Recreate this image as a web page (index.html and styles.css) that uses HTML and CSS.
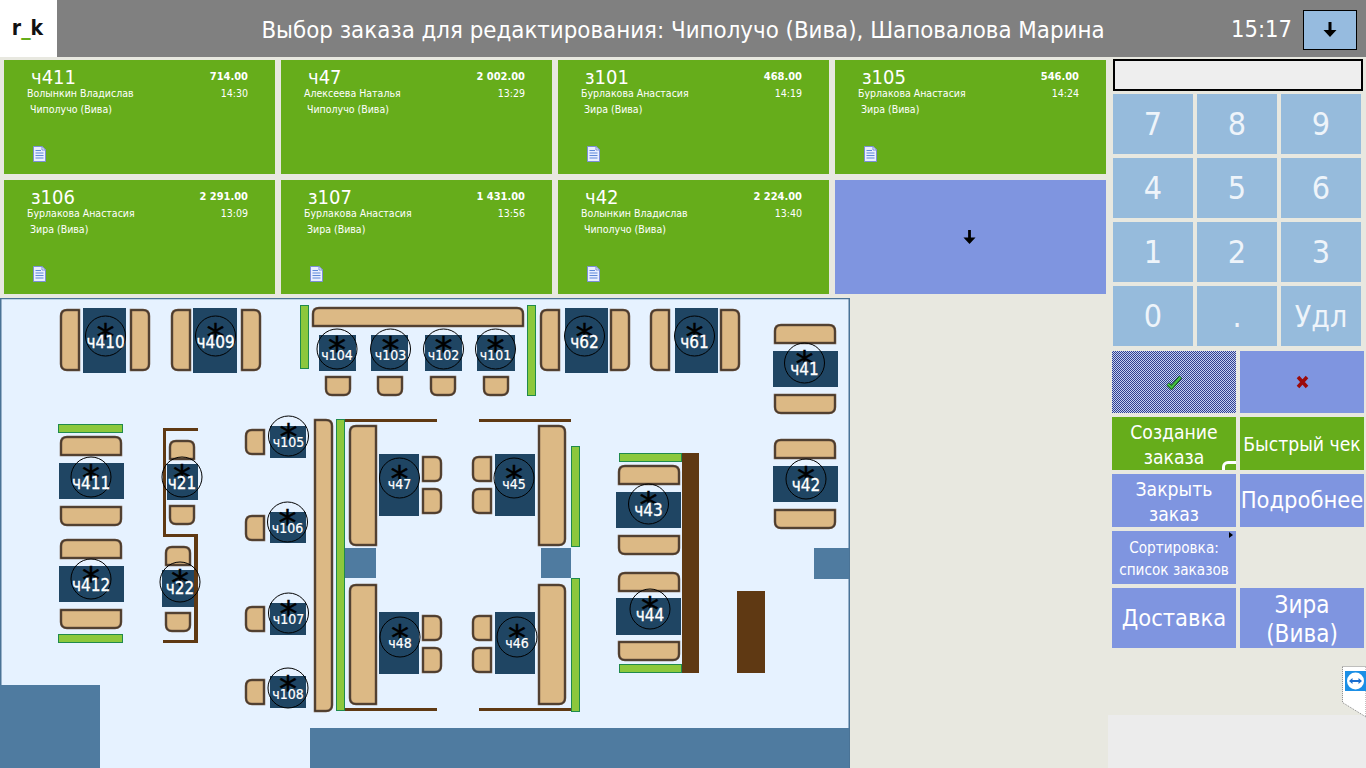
FILE: index.html
```html
<!DOCTYPE html>
<html lang="ru">
<head>
<meta charset="utf-8">
<title>r_k</title>
<link rel="stylesheet" href="styles.css">
</head>
<body>
<div class="app">
  <header class="top">
    <div class="logo">r<span class="us">_</span>k</div>
    <div class="title">Выбор заказа для редактирования: Чиполучо (Вива), Шаповалова Марина</div>
    <div class="clock">
      <span class="time">15:17</span>
      <button class="down"><svg class="arr" viewBox="0 0 14 16"><path d="M5.5 0h3v8h5L7 15 .5 8h5z"/></svg></button>
    </div>
  </header>
  <div class="main">
    <div class="left">
      <section class="cards">
        <article class="card"><div class="row"><span class="num">ч411</span><b class="amt">714.00</b></div><div class="row r2"><span>Волынкин Владислав</span><span>14:30</span></div><div class="place">Чиполучо (Вива)</div><svg class="doc" viewBox="0 0 13 16"><use href="#doc"/></svg></article>
        <article class="card"><div class="row"><span class="num">ч47</span><b class="amt">2 002.00</b></div><div class="row r2"><span>Алексеева Наталья</span><span>13:29</span></div><div class="place">Чиполучо (Вива)</div></article>
        <article class="card"><div class="row"><span class="num">з101</span><b class="amt">468.00</b></div><div class="row r2"><span>Бурлакова Анастасия</span><span>14:19</span></div><div class="place">Зира (Вива)</div><svg class="doc" viewBox="0 0 13 16"><use href="#doc"/></svg></article>
        <article class="card"><div class="row"><span class="num">з105</span><b class="amt">546.00</b></div><div class="row r2"><span>Бурлакова Анастасия</span><span>14:24</span></div><div class="place">Зира (Вива)</div><svg class="doc" viewBox="0 0 13 16"><use href="#doc"/></svg></article>
        <article class="card"><div class="row"><span class="num">з106</span><b class="amt">2 291.00</b></div><div class="row r2"><span>Бурлакова Анастасия</span><span>13:09</span></div><div class="place">Зира (Вива)</div><svg class="doc" viewBox="0 0 13 16"><use href="#doc"/></svg></article>
        <article class="card"><div class="row"><span class="num">з107</span><b class="amt">1 431.00</b></div><div class="row r2"><span>Бурлакова Анастасия</span><span>13:56</span></div><div class="place">Зира (Вива)</div><svg class="doc" viewBox="0 0 13 16"><use href="#doc"/></svg></article>
        <article class="card"><div class="row"><span class="num">ч42</span><b class="amt">2 224.00</b></div><div class="row r2"><span>Волынкин Владислав</span><span>13:40</span></div><div class="place">Чиполучо (Вива)</div><svg class="doc" viewBox="0 0 13 16"><use href="#doc"/></svg></article>
        <button class="more"><svg class="arr small" viewBox="0 0 14 16"><path d="M5.5 0h3v8h5L7 15 .5 8h5z"/></svg></button>
      </section>
      <svg class="floor" viewBox="0 298 850 470">
        <defs>
          <g id="doc"><path class="d1" d="M.5.5H9L12.500 4V15.500H.5z"/><path class="d2" d="M9 .5V4H12.500z"/><path class="d3" d="M2.500 4.500H8M2.500 7H10.500M2.500 9.500H10.500M2.500 12H10.500"/></g>
          <path id="wt" d="M1 19V7Q1 1 7 1H55Q61 1 61 7V19Z"/>
          <path id="wb" d="M1 1V13Q1 19 7 19H55Q61 19 61 13V1Z"/>
          <path id="tl" d="M19 1H7Q1 1 1 7V55Q1 61 7 61H19Z"/>
          <path id="tr" d="M1 1H13Q19 1 19 7V55Q19 61 13 61H1Z"/>
          <path id="st" d="M1 19V7Q1 1 7 1H19Q25 1 25 7V19Z"/>
          <path id="sb" d="M1 1V13Q1 19 7 19H19Q25 19 25 13V1Z"/>
          <path id="sl" d="M19 1H7Q1 1 1 7V19Q1 25 7 25H19Z"/>
          <path id="sr" d="M1 1H13Q19 1 19 7V19Q19 25 13 25H1Z"/>
          <path id="ll" d="M27 1H7Q1 1 1 7V114Q1 120 7 120H27Z"/>
          <path id="lr" d="M1 1H21Q27 1 27 7V114Q27 120 21 120H1Z"/>
          <path id="lv" d="M1 1H12Q18 1 18 7V286Q18 292 12 292H1Z"/>
          <path id="lh" d="M1 19V7Q1 1 7 1H205Q211 1 211 7V19Z"/>
          <g id="seats">
            <use href="#tl" x="60" y="309"/><use href="#tr" x="130" y="309"/>
            <use href="#tl" x="171" y="309"/><use href="#tr" x="241" y="309"/>
            <use href="#tl" x="540" y="309"/><use href="#tr" x="610" y="309"/>
            <use href="#tl" x="650" y="309"/><use href="#tr" x="720" y="309"/>
            <use href="#lh" x="312" y="307"/>
            <use href="#sb" x="325" y="376"/><use href="#sb" x="377" y="376"/><use href="#sb" x="430" y="376"/><use href="#sb" x="483" y="376"/>
            <use href="#wt" x="60" y="436"/><use href="#wb" x="60" y="506"/>
            <use href="#wt" x="60" y="539"/><use href="#wb" x="60" y="609"/>
            <use href="#st" x="169" y="440"/><use href="#sb" x="169" y="505"/>
            <use href="#st" x="165" y="546"/><use href="#sb" x="165" y="612"/>
            <use href="#sl" x="245" y="429"/><use href="#sl" x="245" y="515"/><use href="#sl" x="245" y="606"/><use href="#sl" x="245" y="679"/>
            <use href="#lv" x="314" y="419"/>
            <use href="#ll" x="349" y="425"/><use href="#sr" x="422" y="456"/><use href="#sr" x="422" y="488"/>
            <use href="#sl" x="472" y="456"/><use href="#sl" x="472" y="488"/><use href="#lr" x="538" y="425"/>
            <use href="#ll" x="349" y="584"/><use href="#sr" x="422" y="615"/><use href="#sr" x="422" y="647"/>
            <use href="#sl" x="472" y="615"/><use href="#sl" x="472" y="647"/><use href="#lr" x="538" y="584"/>
            <use href="#wt" x="618" y="465"/><use href="#wb" x="618" y="535"/>
            <use href="#wt" x="618" y="572"/><use href="#wb" x="618" y="641"/>
            <use href="#wt" x="774" y="324"/><use href="#wb" x="774" y="394"/>
            <use href="#wt" x="774" y="439"/><use href="#wb" x="774" y="509"/>
          </g>
        </defs>
        <rect class="ground" x="0.750" y="298.500" width="848.500" height="480"/>
        <g class="block">
          <rect x="0" y="685" width="100" height="90"/>
          <rect x="310" y="728" width="539" height="50"/>
          <rect x="345" y="548" width="31" height="30"/>
          <rect x="541" y="548" width="30" height="30"/>
          <rect x="814" y="548" width="35" height="31"/>
        </g>
        <g class="brown">
          <rect x="163" y="428" width="35" height="3"/>
          <rect x="163" y="428" width="3" height="109"/>
          <rect x="163" y="534" width="35" height="3"/>
          <rect x="194" y="534" width="4" height="109"/>
          <rect x="163" y="640" width="35" height="3"/>
          <rect x="345" y="419" width="92" height="3"/>
          <rect x="479" y="419" width="92" height="3"/>
          <rect x="345" y="708" width="92" height="3"/>
          <rect x="479" y="708" width="92" height="3"/>
          <rect x="682" y="453" width="17" height="220"/>
          <rect x="737" y="591" width="28" height="82"/>
        </g>
        <g class="bar">
          <rect x="300.500" y="305.500" width="8" height="63"/>
          <rect x="527.500" y="305.500" width="8" height="90"/>
          <rect x="58.500" y="424.500" width="64" height="8"/>
          <rect x="58.500" y="634.500" width="64" height="8"/>
          <rect x="336.500" y="419.500" width="8" height="291"/>
          <rect x="571.500" y="446.500" width="8" height="100"/>
          <rect x="571.500" y="578.500" width="8" height="133"/>
          <rect x="619.500" y="453.500" width="62" height="8"/>
          <rect x="619.500" y="664.500" width="62" height="8"/>
        </g>
        <use class="seat-a" href="#seats"/>
        <use class="seat-b" href="#seats"/>
        <g class="tbl">
          <rect x="83" y="308" width="43" height="65"/><rect x="193" y="308" width="44" height="65"/>
          <rect x="565" y="308" width="43" height="65"/><rect x="675" y="308" width="43" height="65"/>
          <rect x="319" y="335" width="37" height="36"/><rect x="371" y="335" width="37" height="36"/>
          <rect x="425" y="335" width="37" height="36"/><rect x="477" y="335" width="38" height="36"/>
          <rect x="59" y="463" width="65" height="36"/><rect x="59" y="566" width="65" height="36"/>
          <rect x="167" y="464" width="31" height="36"/><rect x="162" y="570" width="32" height="37"/>
          <rect x="270" y="426" width="36" height="32"/><rect x="270" y="512" width="36" height="31"/>
          <rect x="270" y="603" width="36" height="32"/><rect x="270" y="676" width="36" height="32"/>
          <rect x="379" y="454" width="40" height="62"/><rect x="495" y="454" width="40" height="62"/>
          <rect x="379" y="612" width="40" height="62"/><rect x="495" y="612" width="40" height="62"/>
          <rect x="616" y="492" width="65" height="36"/><rect x="616" y="598" width="65" height="37"/>
          <rect x="773" y="351" width="65" height="36"/><rect x="773" y="466" width="65" height="36"/>
        </g>
        <g class="mark" transform="translate(105.500 336)"><circle r="20"/><text class="ast" y="13">*</text><text class="lb" y="11.500">ч410</text></g>
        <g class="mark" transform="translate(215.500 336)"><circle r="20"/><text class="ast" y="13">*</text><text class="lb" y="11.500">ч409</text></g>
        <g class="mark" transform="translate(584.500 336)"><circle r="20"/><text class="ast" y="13">*</text><text class="lb" y="11.500">ч62</text></g>
        <g class="mark" transform="translate(694.500 336)"><circle r="20"/><text class="ast" y="13">*</text><text class="lb" y="11.500">ч61</text></g>
        <g class="mark" transform="translate(337 349)"><circle r="20"/><text class="ast" y="13">*</text><text class="lb sm" y="10.500">ч104</text></g>
        <g class="mark" transform="translate(390.500 349)"><circle r="20"/><text class="ast" y="13">*</text><text class="lb sm" y="10.500">ч103</text></g>
        <g class="mark" transform="translate(443.500 349)"><circle r="20"/><text class="ast" y="13">*</text><text class="lb sm" y="10.500">ч102</text></g>
        <g class="mark" transform="translate(495.500 349)"><circle r="20"/><text class="ast" y="13">*</text><text class="lb sm" y="10.500">ч101</text></g>
        <g class="mark" transform="translate(804.500 363)"><circle r="20"/><text class="ast" y="13">*</text><text class="lb" y="11.500">ч41</text></g>
        <g class="mark" transform="translate(806 479)"><circle r="20"/><text class="ast" y="13">*</text><text class="lb" y="11.500">ч42</text></g>
        <g class="mark" transform="translate(91 477)"><circle r="20"/><text class="ast" y="13">*</text><text class="lb" y="11.500">ч411</text></g>
        <g class="mark" transform="translate(91 579)"><circle r="20"/><text class="ast" y="13">*</text><text class="lb" y="11.500">ч412</text></g>
        <g class="mark" transform="translate(182 477)"><circle r="20"/><text class="ast" y="13">*</text><text class="lb" y="11.500">ч21</text></g>
        <g class="mark" transform="translate(180 582)"><circle r="20"/><text class="ast" y="13">*</text><text class="lb" y="11.500">ч22</text></g>
        <g class="mark" transform="translate(288.500 436)"><circle r="20"/><text class="ast" y="13">*</text><text class="lb sm" y="10.500">ч105</text></g>
        <g class="mark" transform="translate(287.500 522)"><circle r="20"/><text class="ast" y="13">*</text><text class="lb sm" y="10.500">ч106</text></g>
        <g class="mark" transform="translate(288.500 613)"><circle r="20"/><text class="ast" y="13">*</text><text class="lb sm" y="10.500">ч107</text></g>
        <g class="mark" transform="translate(288 688)"><circle r="20"/><text class="ast" y="13">*</text><text class="lb sm" y="10.500">ч108</text></g>
        <g class="mark" transform="translate(399.500 478)"><circle r="20"/><text class="ast" y="13">*</text><text class="lb sm" y="10.500">ч47</text></g>
        <g class="mark" transform="translate(514 478)"><circle r="20"/><text class="ast" y="13">*</text><text class="lb sm" y="10.500">ч45</text></g>
        <g class="mark" transform="translate(400 637)"><circle r="20"/><text class="ast" y="13">*</text><text class="lb sm" y="10.500">ч48</text></g>
        <g class="mark" transform="translate(517 637)"><circle r="20"/><text class="ast" y="13">*</text><text class="lb sm" y="10.500">ч46</text></g>
        <g class="mark" transform="translate(648.500 504)"><circle r="20"/><text class="ast" y="13">*</text><text class="lb" y="11.500">ч43</text></g>
        <g class="mark" transform="translate(650 609)"><circle r="20"/><text class="ast" y="13">*</text><text class="lb" y="11.500">ч44</text></g>
      </svg>
    </div>
    <aside class="side">
      <div class="field"></div>
      <div class="pad">
        <button class="key">7</button><button class="key">8</button><button class="key">9</button>
        <button class="key">4</button><button class="key">5</button><button class="key">6</button>
        <button class="key">1</button><button class="key">2</button><button class="key">3</button>
        <button class="key">0</button><button class="key">.</button><button class="key del">Удл</button>
      </div>
      <div class="acts">
        <button class="act ok"><svg class="ico" viewBox="0 0 16 15"><path class="chk-o" d="M2 9L5.500 12.500L14.500 2"/><path class="chk-i" d="M2 9L5.500 12.500L14.500 2"/></svg></button>
        <button class="act cancel"><svg class="ico x" viewBox="0 0 13 14"><path class="cross" d="M2 2l9 10M11 2L2 12"/></svg></button>
        <button class="act green m20">Создание заказа<span class="arc"></span></button>
        <button class="act green m20 nw">Быстрый чек</button>
        <button class="act m20">Закрыть заказ</button>
        <button class="act m25 nw">Подробнее</button>
        <button class="act m16">Сортировка: список заказов<span class="tri"></span></button>
        <div class="blank"></div>
        <button class="act m25">Доставка</button>
        <button class="act m23">Зира (Вива)</button>
      </div>
      <div class="tray"></div>
      <svg class="tv" viewBox="0 0 24 52">
        <path class="tvb" d="M.5.5H24V51L.5 36.500z"/>
        <rect class="tvs" x="3" y="5" width="21" height="20"/>
        <circle class="tvc" cx="13.500" cy="15" r="8.500"/>
        <path class="tva" d="M7 15l3.500-3v2h6v-2l3.500 3-3.500 3v-2h-6v2z"/>
      </svg>
    </aside>
  </div>
</div>
</body>
</html>
```
FILE: styles.css
```css
* { box-sizing: border-box; }
html, body { margin: 0; padding: 0; }
body {
  width: 1366px;
  height: 768px;
  overflow: hidden;
  background: #e8e8e0;
  font-family: "DejaVu Sans", sans-serif;
  font-stretch: condensed;
  color: #fff;
}
button {
  font: inherit;
  color: inherit;
  border: 0;
  padding: 0;
  margin: 0;
}
.app { display: flex; flex-direction: column; height: 768px; }

.top {
  height: 57px;
  flex: none;
  background: #808080;
  display: grid;
  grid-template-columns: 1fr auto 1fr;
  align-items: center;
}
.logo {
  justify-self: start;
  width: 57px;
  height: 57px;
  padding-right: 2px;
  background: #fff;
  color: #111;
  font-size: 21px;
  font-weight: 700;
  line-height: 56px;
  text-align: center;
}
.us { color: #66ad1b; }
.title { font-size: 23.800px; white-space: nowrap; padding-top: 2px; }
.clock {
  justify-self: end;
  display: flex;
  align-items: center;
  gap: 11px;
  padding-right: 9px;
}
.time { font-size: 23.500px; }
.down {
  width: 54px;
  height: 40px;
  margin-top: 3px;
  background: #96bbdf;
  border: 1px solid #000;
  display: flex;
  align-items: center;
  justify-content: center;
}
.arr { width: 14px; height: 16px; fill: #000; display: block; }
.arr.small { width: 13px; height: 15px; margin-right: 2px; }

.main { flex: 1; display: flex; min-height: 0; }
.left { width: 1108px; flex: none; display: flex; flex-direction: column; }
.cards {
  padding: 3px 0 0 4px;
  display: grid;
  grid-template-columns: repeat(4, 271px);
  grid-auto-rows: 114px;
  gap: 6px;
}
.card {
  background: #66ad1b;
  padding: 7px 27px 12px 23px;
  display: flex;
  flex-direction: column;
  font-size: 10.500px;
}
.row { display: flex; justify-content: space-between; align-items: flex-start; }
.num { font-size: 20px; line-height: 21px; padding-left: 4px; }
.amt { font-size: 11px; line-height: 13px; margin-top: 3px; }
.r2 { line-height: 12px; margin-top: -1px; }
.place { line-height: 14px; margin-top: 3px; padding-left: 3px; }
.doc { width: 13px; height: 16px; margin: auto 0 0 6px; display: block; }
.d1 { fill: #e8eeff; stroke: #7c8fd8; }
.d2 { fill: #fff; stroke: #7c8fd8; }
.d3 { fill: none; stroke: #5f8ad8; }
.more {
  background: #7f95e0;
  display: flex;
  align-items: center;
  justify-content: center;
}

.floor { width: 850px; height: 470px; margin-top: 4px; display: block; }
.ground { fill: #e6f2ff; stroke: #4a7396; stroke-width: 1.500; }
.block rect { fill: #4f7ba0; }
.brown rect { fill: #5f3913; }
.bar rect { fill: #8cc83c; stroke: #1f8a4c; }
.seat-a { fill: #dcb985; stroke: #6b5542; stroke-width: 2.500; }
.seat-b { fill: none; stroke: #2e241c; stroke-width: .8; }
.tbl rect { fill: #1f4563; }
.mark circle { fill: none; stroke: #000; stroke-width: 1; }
.mark text { text-anchor: middle; }
.ast { font-size: 36px; fill: #000; stroke: #000; stroke-width: .4; font-stretch: normal; }
.lb { font-size: 17px; fill: #fff; stroke: #fff; stroke-width: .3; }
.lb.sm { font-size: 14px; stroke-width: .2; }

.side { width: 258px; flex: none; position: relative; display: flex; flex-direction: column; padding-top: 2px; }
.field {
  width: 250px;
  height: 32px;
  margin-left: 5px;
  background: #eee;
  border: 2px solid #000;
}
.pad {
  margin: 3px 0 0 5px;
  display: grid;
  grid-template-columns: repeat(3, 80px);
  grid-auto-rows: 60px;
  gap: 4px;
}
.key { background: #96bbdc; font-size: 32px; color: #eef4fa; }
.key.del { font-size: 30px; }
.acts {
  margin: 5px 0 0 4px;
  display: grid;
  grid-template-columns: repeat(2, 124px);
  grid-template-rows: 62px 53px 53px 53px 60px;
  gap: 4px;
}
.act {
  position: relative;
  background: #7f95e0;
  display: flex;
  align-items: center;
  justify-content: center;
  text-align: center;
  line-height: 1.200;
  overflow: hidden;
}
.green { background: #66ad1b; }
.m16 { font-size: 15.200px; line-height: 22px; padding-top: 2px; }
.m20 { font-size: 19.200px; line-height: 25px; padding-top: 2px; }
.m23 { font-size: 24px; padding-top: 4px; }
.m25 { font-size: 23.500px; }
.nw { white-space: nowrap; }
.ok {
  background: conic-gradient(#2f3f8e 25%, #c4cef2 0 50%, #2f3f8e 0 75%, #c4cef2 0) 0 0 / 2px 2px;
}
.ico { width: 16px; height: 15px; display: block; }
.ico.x { width: 13px; height: 14px; }
.chk-o { fill: none; stroke: #14501f; stroke-width: 4; }
.chk-i { fill: none; stroke: #45c040; stroke-width: 2; }
.cross { fill: none; stroke: #9c0a0a; stroke-width: 3.500; }
.arc {
  position: absolute;
  right: -6px;
  bottom: -8px;
  width: 20px;
  height: 17px;
  border: 3px solid #fff;
  border-radius: 6px;
}
.tri {
  position: absolute;
  right: 3px;
  top: 1px;
  border-left: 4px solid #000;
  border-top: 3px solid transparent;
  border-bottom: 3px solid transparent;
}
.tray { margin-top: auto; height: 53px; background: #ececec; }
.tv { position: absolute; right: 0; top: 609px; width: 24px; height: 52px; display: block; }
.tvb { fill: #fff; stroke: #888; stroke-dasharray: 1 1; }
.tvs { fill: #1b8fe6; }
.tvc { fill: #fff; }
.tva { fill: #1b6fd0; }
```
